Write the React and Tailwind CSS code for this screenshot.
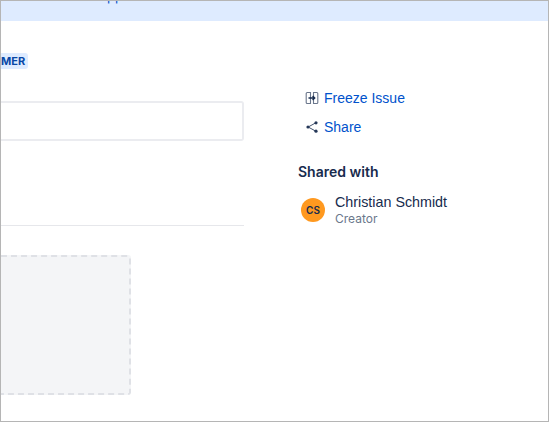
import React from "react";

function FreezeIcon() {
  return (
    <svg width="14" height="14" viewBox="0 0 14 14" fill="none" stroke="#6b778c" strokeWidth="1.1">
      <path d="M5.5 1.5H2.2a1 1 0 0 0-1 1v9a1 1 0 0 0 1 1h3.3z" />
      <path d="M8.5 1.5h3.3a1 1 0 0 1 1 1v9a1 1 0 0 1-1 1H8.5z" />
      <path d="M3.5 7h6M7.6 5l2.1 2-2.1 2" stroke="#172b4d" strokeWidth="1.4" />
    </svg>
  );
}

function ShareIcon() {
  return (
    <svg width="14" height="14" viewBox="0 0 14 14" fill="none" stroke="#42526e" strokeWidth="1">
      <path d="M3.2 7 10.8 2.8M3.2 7l7.6 4.2" />
      <circle cx="3" cy="7" r="1.6" fill="#253858" stroke="none" />
      <circle cx="11" cy="2.8" r="1.6" fill="#253858" stroke="none" />
      <circle cx="11" cy="11.2" r="1.6" fill="#253858" stroke="none" />
    </svg>
  );
}

export default function App() {
  return (
    <div className="w-[549px] h-[422px] overflow-hidden bg-white border border-[#b5b5b5] font-['Inter',sans-serif]">
      <div className="h-5 bg-[#deebff] overflow-hidden">
        <p className="mt-[-13px] ml-[90px] text-[13px] leading-4 text-[#0052cc]">Support</p>
      </div>

      <div className="flex">
        <div className="w-[243px] shrink-0">
          <div className="mt-[32px] flex">
            <span className="h-4 w-[27px] rounded-r-[3px] bg-[#deebff] pr-[4px] text-right text-[11px] leading-4 font-bold text-[#0747a6]">
              MER
            </span>
          </div>
          <div className="mt-[32px] h-10 rounded-r-[3px] border-y-2 border-r-2 border-[#ebecf0]" />
          <div className="mt-[84px] h-px bg-[#e6e7eb]" />
          <div className="mt-[29px] h-[140px] w-[130px] rounded-r-[3px] border-y-2 border-r-2 border-dashed border-[#dfe1e6] bg-[#f4f5f7]" />
        </div>

        <div className="ml-[54px] pt-[67px]">
          <a className="flex h-5 items-center pl-[7px] font-['Liberation_Sans',sans-serif] text-[14px] text-[#0052cc]">
            <FreezeIcon />
            <span className="ml-[5px]">Freeze Issue</span>
          </a>
          <a className="mt-[9px] flex h-5 items-center pl-[7px] font-['Liberation_Sans',sans-serif] text-[14px] text-[#0052cc]">
            <ShareIcon />
            <span className="ml-[5px]">Share</span>
          </a>
          <h3 className="mt-[25px] text-sm leading-5 font-semibold text-[#172b4d]">Shared with</h3>
          <div className="mt-[9px] flex items-center pl-[3px]">
            <div className="mt-[2px] flex h-6 w-6 items-center justify-center rounded-full bg-[#ff991f] text-[10px] font-semibold text-[#172b4d]">
              CS
            </div>
            <div className="ml-[10px] mt-[2px]">
              <p className="font-['Liberation_Sans',sans-serif] text-[14.3px] leading-[18px] text-[#172b4d]">Christian Schmidt</p>
              <p className="text-xs leading-4 text-[#6b778c]">Creator</p>
            </div>
          </div>
        </div>
      </div>
    </div>
  );
}
